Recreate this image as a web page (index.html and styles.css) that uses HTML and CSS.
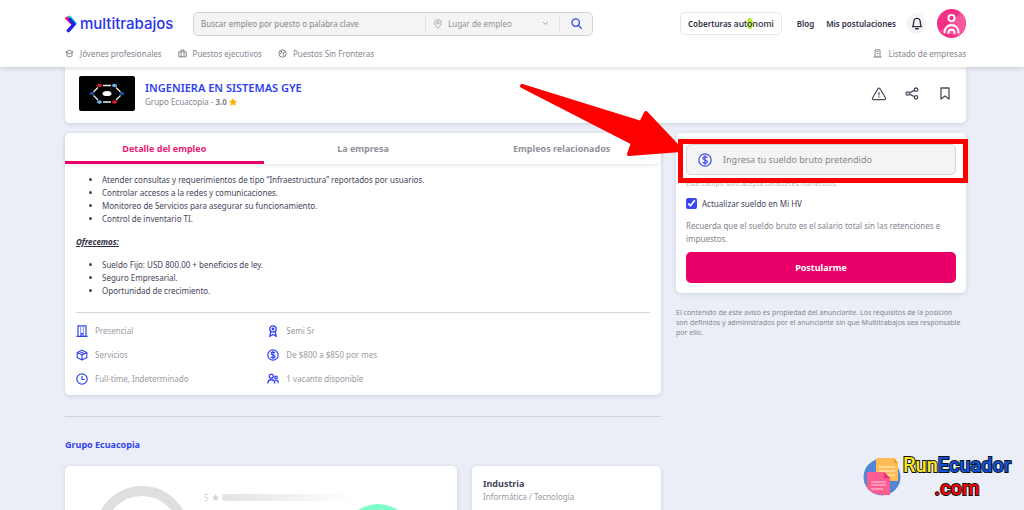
FILE: index.html
```
<!DOCTYPE html>
<html lang="es">

<head>
  <meta charset="UTF-8" />
  <meta name="viewport" content="width=device-width, initial-scale=1" />
  <title>Ingeniera en Sistemas GYE - Multitrabajos</title>
  <link rel="stylesheet" href="styles.css">
</head>

<body>
  <header class="header">
    <div class="header-top">
      <a class="logo" href="#">
        <svg width="12" height="18" viewBox="0 0 12 18" fill="none" stroke-width="3.4" stroke-linecap="round" stroke-linejoin="round">
          <path d="M4.500 2.200 10 8.500" stroke="#14d0c8" />
          <path d="M2 3.200 7.500 8.500" stroke="#f5086f" />
          <path d="M5 4.500 9 9.400 3.400 15.600" stroke="#1a22e8" />
        </svg>
        <span>multitrabajos</span>
      </a>

      <form class="search">
        <input class="search-text" type="text" aria-label="Buscar empleo" placeholder="Buscar empleo por puesto o palabra clave" />
        <div class="search-place">
          <svg width="8" height="10" viewBox="0 0 8 10" fill="none" stroke="#aaaab2"><path d="M4 9.200C2 7 .7 5.600.7 3.800A3.300 3.200 0 0 1 7.300 3.800C7.300 5.600 6 7 4 9.200Z" /><circle cx="4" cy="3.800" r="1.200" /></svg>
          <select aria-label="Lugar de empleo"><option>Lugar de empleo</option></select>
          <svg width="7" height="5" viewBox="0 0 7 5" fill="none" stroke="#a5a5ad"><path d="M1 1l2.500 2.500L6 1" /></svg>
        </div>
        <button class="search-btn" type="submit" aria-label="Buscar">
          <svg width="11" height="11" viewBox="0 0 11 11" fill="none" stroke="#3a46f2" stroke-width="1.300" stroke-linecap="round"><circle cx="4.700" cy="4.600" r="3.700" /><path d="M7.500 7.500 10.200 10.200" /></svg>
        </button>
      </form>

      <nav class="user-nav">
        <a class="coberturas" href="#">Coberturas <span class="autonomi">aut<i>o</i>nomi</span></a>
        <a class="blog" href="#">Blog</a>
        <a class="postulaciones" href="#">Mis postulaciones</a>
        <button class="bell" type="button" aria-label="Notificaciones">
          <svg width="12" height="13" viewBox="0 0 12 13" fill="none" stroke="#303045" stroke-width="1.400" stroke-linejoin="round"><path d="M1.500 9.600h9C9.300 8.400 9.300 7.500 9.300 5A3.300 3.600 0 0 0 2.700 5C2.700 7.500 2.700 8.400 1.500 9.600Z" /><path d="M4.700 11.700h2.600" stroke-linecap="round" /></svg>
        </button>
        <button class="avatar" type="button" aria-label="Mi cuenta">
          <svg width="29" height="29" viewBox="0 0 29 29" fill="none">
            <circle cx="14.500" cy="14.500" r="14.500" fill="#f42f86" />
            <path d="M3 23 24 3.500A14.500 14.500 0 0 1 26 23L22 27Z" fill="#f865a5" opacity=".75" />
            <g stroke="#fff" stroke-width="1.900" stroke-linecap="round"><circle cx="14.500" cy="9" r="3.100" /><path d="M7.500 23.500c0-10 14-10 14 0M11.500 24c0-4.300 6-4.300 6 0" /></g>
          </svg>
        </button>
      </nav>
    </div>

    <nav class="header-links">
      <a href="#"><svg width="9" height="9" viewBox="0 0 9 9" fill="none" stroke="#85858f"><path d="M.8 3 4.500 1.200 8.200 3 4.500 4.800ZM2 4v3c1.400.9 3.600.9 5 0V4" /></svg>Jóvenes profesionales</a>
      <a href="#"><svg width="9" height="9" viewBox="0 0 9 9" fill="none" stroke="#85858f"><path d="M.8 2.800h7.400v5H.8ZM3 2.800V1h3v1.800M3 3v5M6 3v5" /></svg>Puestos ejecutivos</a>
      <a href="#"><svg width="9" height="9" viewBox="0 0 9 9" fill="none" stroke="#85858f"><circle cx="4.500" cy="4.500" r="3.700" /><path d="M2 2l2 .5L3 4.500l-1.500.5M7.500 3 5.500 3.500 5 5l1 2" /></svg>Puestos Sin Fronteras</a>
      <a class="empresas" href="#"><svg width="9" height="9" viewBox="0 0 9 9" fill="none" stroke="#85858f"><path d="M2 8V.8h5V8M.5 8h8M4.500 8V6.500M3.500 2.500h2M3.500 4.500h2" /></svg>Listado de empresas</a>
    </nav>
  </header>

  <main class="page">
    <section class="job-head">
      <svg class="company-logo" width="56" height="35" viewBox="0 0 56 35">
        <rect width="56" height="35" rx="2" fill="#000" />
        <path d="M24 9.500h8M24 26h8M19 11.500l-4.500 4.500M37 11.500l4.500 4.500M14.500 19.500 19 24M41.500 19.500 37 24" fill="none" stroke="#eee" stroke-width="1.300" />
        <ellipse cx="28" cy="17.500" rx="4.500" ry="2.600" fill="#fff" />
        <g fill="#d71d35"><ellipse cx="20.500" cy="9.500" rx="2.500" ry="1.800" /><ellipse cx="35.500" cy="26" rx="2.500" ry="1.800" /></g>
        <g fill="#6db5e8"><ellipse cx="35.500" cy="9.500" rx="2.500" ry="1.800" /><ellipse cx="20.500" cy="26" rx="2.500" ry="1.800" /></g>
        <g fill="#16509c"><ellipse cx="13" cy="17.500" rx="2.500" ry="1.800" /><ellipse cx="43" cy="17.500" rx="2.500" ry="1.800" /></g>
      </svg>
      <div class="job-title">
        <h1>INGENIERA EN SISTEMAS GYE</h1>
        <p>Grupo Ecuacopia - <b>3.0</b> <svg width="8" height="8" viewBox="0 0 10 10"><path d="M5 0l1.500 3.200 3.500.5-2.500 2.500.6 3.600L5 8.100 1.900 9.800l.6-3.600L0 3.700l3.500-.5Z" fill="#ffb100" /></svg></p>
      </div>
      <div class="job-actions">
        <button type="button" aria-label="Denunciar"><svg width="16" height="14" viewBox="0 0 16 14" fill="none" stroke="#4c4c5e" stroke-width="1.200" stroke-linejoin="round"><path d="M8 1.200Q8.700 1.200 9.200 2L14.500 11Q15 12.600 13.500 12.600H2.500Q1 12.600 1.500 11L6.800 2Q7.300 1.200 8 1.200ZM8 5v3.500M8 9.600v1.200" /></svg></button>
        <button type="button" aria-label="Compartir"><svg width="14" height="13" viewBox="0 0 14 13" fill="none" stroke="#4c4c5e" stroke-width="1.300"><circle cx="2.700" cy="6.500" r="1.700" /><circle cx="11" cy="2.700" r="1.700" /><circle cx="11" cy="10.300" r="1.700" /><path d="M4.200 5.800 9.400 3.300M4.200 7.200 9.400 9.700" /></svg></button>
        <button type="button" aria-label="Guardar"><svg width="10" height="13" viewBox="0 0 10 13" fill="none" stroke="#4c4c5e" stroke-width="1.300" stroke-linejoin="round"><path d="M1 1h8v11L5 9 1 12Z" /></svg></button>
      </div>
    </section>

    <div class="columns">
      <div class="main-col">
        <section class="detail">
          <div class="tabs">
            <button class="tab active" type="button">Detalle del empleo</button>
            <button class="tab" type="button">La empresa</button>
            <button class="tab" type="button">Empleos relacionados</button>
          </div>
          <div class="detail-body">
            <ul>
              <li>Atender consultas y requerimientos de tipo “Infraestructura” reportados por usuarios.</li>
              <li>Controlar accesos a la redes y comunicaciones.</li>
              <li>Monitoreo de Servicios para asegurar su funcionamiento.</li>
              <li>Control de inventario TI.</li>
            </ul>
            <h3>Ofrecemos:</h3>
            <ul>
              <li>Sueldo Fijo: USD 800.00 + beneficios de ley.</li>
              <li>Seguro Empresarial.</li>
              <li>Oportunidad de crecimiento.</li>
            </ul>
            <div class="facts">
              <div><svg width="12" height="12" viewBox="0 0 12 12" fill="none" stroke="#3344f0" stroke-width="1.200"><path d="M2 11.300V.8h8v10.500M.5 11.300h11M5 11V8.500h2V11" /><path d="M4 3h1.200M6.800 3H8M4 5h1.200M6.800 5H8M4 7h1.200M6.800 7H8" /></svg>Presencial</div>
              <div><svg width="12" height="12" viewBox="0 0 12 12" fill="none" stroke="#3344f0" stroke-width="1.300"><circle cx="6" cy="4" r="3.200" /><circle cx="6" cy="4" r=".8" /><path d="M3.800 6.500 2.800 11.300 6 9.400 9.200 11.300 8.200 6.500" /></svg>Semi Sr</div>
              <div><svg width="12" height="12" viewBox="0 0 12 12" fill="none" stroke="#3344f0" stroke-width="1.200" stroke-linejoin="round"><path d="M6 1.200 10.800 3.500V8.500L6 11 1.200 8.500V3.500ZM1.200 3.500 6 6l4.800-2.500M6 6v5M3.500 2.400 8.300 4.800" /></svg>Servicios</div>
              <div><svg width="12" height="12" viewBox="0 0 12 12" fill="none" stroke="#3344f0" stroke-width="1.200"><circle cx="6" cy="6" r="5.200" /><path d="M8 4.200C7.500 2.700 4.200 2.900 4.200 4.600S8 5.800 8 7.500 4.500 9.200 4 7.800M6 2v8" /></svg>De $800 a $850 por mes</div>
              <div><svg width="12" height="12" viewBox="0 0 12 12" fill="none" stroke="#3344f0" stroke-width="1.200"><circle cx="6" cy="6" r="5.200" /><path d="M6 3v3.500h2.600" /></svg>Full-time, Indeterminado</div>
              <div><svg width="12" height="12" viewBox="0 0 12 12" fill="none" stroke="#3344f0" stroke-width="1.300"><circle cx="4.300" cy="3.200" r="2" /><path d="M.8 10.500c0-5 7-5 7 0" /><circle cx="9" cy="4.500" r="1.300" /><path d="M8 7.300c2.300-.8 3.300 1 3.300 3" /></svg>1 vacante disponible</div>
            </div>
          </div>
        </section>

        <section class="company">
          <h2>Grupo Ecuacopia</h2>
          <div class="company-cards">
            <div class="card rating">
              <svg class="ring" width="94" height="94" viewBox="0 0 94 94"><circle cx="47" cy="47" r="42" fill="none" stroke="#dfdfe1" stroke-width="10" /></svg>
              <div class="stars"><span>5</span><svg width="7" height="7" viewBox="0 0 10 10"><path d="M5 0l1.500 3.200 3.500.5-2.500 2.500.6 3.600L5 8.100 1.900 9.800l.6-3.600L0 3.700l3.500-.5Z" fill="#d5d5d8" /></svg><div class="bar"></div></div>
              <div class="blob"></div>
            </div>
            <div class="card industry">
              <h4>Industria</h4>
              <p>Informática / Tecnología</p>
            </div>
          </div>
        </section>
      </div>

      <aside class="side-col">
        <form class="card apply">
          <div class="salary">
            <svg width="14" height="14" viewBox="0 0 12 12" fill="none" stroke="#4650f0" stroke-width="1.100"><circle cx="6" cy="6" r="5.300" /><path d="M8 4.200C7.500 2.700 4.200 2.900 4.200 4.600S8 5.800 8 7.500 4.500 9.200 4 7.800M6 2v8" /></svg>
            <input type="text" aria-label="Sueldo bruto pretendido" placeholder="Ingresa tu sueldo bruto pretendido" />
          </div>
          <p class="hint">Este campo solo acepta caracteres numéricos.</p>
          <label class="check"><input type="checkbox" checked />Actualizar sueldo en Mi HV</label>
          <p class="note">Recuerda que el sueldo bruto es el salario total sin las retenciones e impuestos.</p>
          <button class="apply-btn" type="submit">Postularme</button>
        </form>
        <p class="legal">El contenido de este aviso es propiedad del anunciante. Los requisitos de la posición son definidos y administrados por el anunciante sin que Multitrabajos sea responsable por ello.</p>
      </aside>
    </div>
  </main>

  <svg class="arrow" width="170" height="80" viewBox="0 0 170 80"><path d="M3 5 122 42 127 32 162 69 110 73 114 62Z" fill="#f00" stroke="#f00" stroke-width="4" stroke-linejoin="round" /></svg>
  <div class="marker"></div>

  <a class="watermark" href="#">
    <svg width="38" height="40" viewBox="0 0 38 40">
      <circle cx="19" cy="20" r="18.500" fill="#5187d6" />
      <path d="M13 1h18l4 5v18H13Z" fill="#ffbb55" /><path d="M31 1v5h4Z" fill="#f49b28" />
      <path d="M16 10h16M16 14h16M16 18h16" stroke="#fff2d8" />
      <path d="M4 15h17l6 6v17H20Q10 38 4 31Z" fill="#ff5c91" /><path d="M21 15v6h6Z" fill="#d93473" />
      <path d="M8 25h15M8 28h15M8 32h12" stroke="#ffd7e4" />
    </svg>
    <span class="watermark-text"><span class="run">Run</span><span class="ecuador">Ecuador</span><br /><span class="com">.com</span></span>
  </a>
</body>

</html>
```
FILE: styles.css
```
* {
  margin: 0;
  padding: 0;
  box-sizing: border-box;
}

body {
  position: relative;
  height: 100vh;
  overflow: hidden;
  background-color: #ebeef7;
  color: #45455a;
  font-family: 'Noto Sans', sans-serif;
  font-size: 8px;
  line-height: 13px;
}

a {
  color: inherit;
  text-decoration: none;
}

button,
input,
select {
  border: none;
  background: none;
  font: inherit;
  color: inherit;
  outline: none;
}

button {
  cursor: pointer;
}

svg {
  flex: none;
}

/* Header */
.header {
  position: relative;
  z-index: 2;
  padding: 9px 58px 7px 65px;
  background-color: #fff;
  box-shadow: 0 1px 5px rgba(0, 0, 0, 0.16);
}

.header-top {
  display: flex;
  align-items: center;
  height: 29px;
}

.logo {
  display: flex;
  align-items: center;
  gap: 3px;
  width: 128px;
  color: #2733ec;
  font-family: Inter, sans-serif;
  font-size: 15px;
  font-weight: 500;
  line-height: 20px;
}

.search {
  display: flex;
  align-items: center;
  flex: 0 1 400px;
  height: 24px;
  border: 1px solid #d5d5d8;
  border-radius: 5px;
  background-color: #f4f4f4;
}

.search-text {
  flex: 1;
  padding: 0 7px;
}

.search-text::placeholder,
.salary input::placeholder {
  color: #85858d;
  opacity: 1;
}

.search-place {
  display: flex;
  align-items: center;
  gap: 6px;
  width: 135px;
  height: 16px;
  padding: 0 10px 0 8px;
  border: 1px solid #e3e3e6;
  border-width: 0 1px;
}

.search-place select {
  flex: 1;
  appearance: none;
  color: #92929b;
}

.search-btn {
  display: flex;
  justify-content: center;
  align-items: center;
  width: 32px;
}

.user-nav {
  display: flex;
  align-items: center;
  margin-left: auto;
  color: #303045;
  font-weight: 600;
}

.coberturas {
  padding: 4px 7px;
  margin-right: 15px;
  border: 1px solid #e8e8ec;
  border-radius: 5px;
}

.autonomi {
  font-family: Inter, sans-serif;
  font-size: 9px;
  font-weight: 500;
}

.autonomi i {
  font-style: normal;
  border-radius: 50%;
  background-color: #b6f02c;
}

.blog {
  margin-right: 12px;
}

.bell {
  display: flex;
  justify-content: center;
  align-items: center;
  width: 21px;
  height: 21px;
  margin: 0 10px;
  border-radius: 50%;
  background-color: #f5f5f6;
}

.avatar {
  display: flex;
}

.header-links {
  display: flex;
  gap: 16px;
  margin-top: 9px;
  color: #85858f;
}

.header-links a {
  display: flex;
  align-items: center;
  gap: 6px;
}

.header-links .empresas {
  margin-left: auto;
}

/* Job */
.page {
  padding: 0 58px 0 65px;
}

.card,
.job-head,
.detail {
  border-radius: 5px;
  background-color: #fff;
  box-shadow: 0 1px 4px rgba(40, 50, 80, 0.16);
}

.job-head {
  display: flex;
  align-items: center;
  gap: 10px;
  padding: 9px 5px 12px 14px;
  border-radius: 0 0 5px 5px;
}

.job-title h1 {
  color: #2f3ff0;
  font-size: 11px;
  font-weight: 600;
  line-height: 15px;
}

.job-title p {
  color: #85858f;
}

.job-title p svg {
  vertical-align: -1px;
}

.job-actions {
  display: flex;
  margin-left: auto;
}

.job-actions button {
  display: flex;
  align-items: center;
  justify-content: center;
  width: 33px;
}

.columns {
  display: flex;
  align-items: flex-start;
  gap: 15px;
  margin-top: 10px;
}

.main-col {
  flex: 1;
}

.side-col {
  flex: 0 0 290px;
}

.tabs {
  display: flex;
  height: 31px;
  border-radius: 5px;
  box-shadow: 0 2px 4px rgba(0, 0, 0, 0.08);
}

.tab {
  flex: 1;
  padding-top: 3px;
  border-bottom: 3px solid transparent;
  color: #92929b;
  font-size: 9px;
  font-weight: 700;
}

.tab.active {
  border-bottom-color: #e80068;
  color: #ec1a76;
}

.detail-body {
  padding: 9px 11px;
}

.detail-body ul {
  padding-left: 26px;
}

.detail-body h3 {
  margin: 10px 0;
  color: #303045;
  font-size: 8px;
  font-style: italic;
  text-decoration: underline;
}

.facts {
  display: grid;
  grid-template-columns: 1fr 2fr;
  gap: 11px 0;
  margin-top: 15px;
  padding: 11px 0 1px;
  border-top: 1px solid #d5d5d8;
  color: #9a9aa2;
}

.facts div {
  display: flex;
  align-items: center;
  gap: 7px;
}

/* Company */
.company {
  margin-top: 21px;
  border-top: 1px solid #d1d3d9;
}

.company h2 {
  margin: 21px 0 15px;
  color: #3442ee;
  font-size: 9px;
  font-weight: 700;
}

.company-cards {
  display: flex;
  gap: 15px;
}

.rating {
  display: flex;
  flex: 1;
  height: 130px;
  padding: 20px 30px;
  overflow: hidden;
}

.stars {
  display: flex;
  align-items: center;
  gap: 3px;
  height: 22px;
  margin-left: 15px;
  color: #d0d0d4;
}

.bar {
  width: 130px;
  height: 7px;
  border-radius: 2px;
  background: linear-gradient(to right, #e3e3e5, #fff);
}

.blob {
  flex: none;
  width: 72px;
  height: 72px;
  margin: 18px 0 0 -10px;
  border-radius: 50%;
  background-color: #7dffc8;
}

.industry {
  width: 189px;
  padding: 11px;
  color: #9a9aa2;
}

.industry h4 {
  color: #45455a;
  font-size: 9px;
  font-weight: 700;
}

/* Apply */
.apply {
  padding: 11px 10px 10px;
}

.salary {
  display: flex;
  align-items: center;
  gap: 11px;
  height: 31px;
  padding: 0 11px;
  border: 1px solid #d5d5d8;
  border-radius: 5px;
  background-color: #f4f4f4;
}

.salary input {
  flex: 1;
  font-size: 9px;
}

.hint {
  margin-top: 2px;
  color: #b5b5bc;
  font-size: 7px;
}

.check {
  display: flex;
  align-items: center;
  gap: 5px;
  margin: 7px 0 9px;
}

.check input {
  width: 11px;
  height: 11px;
  accent-color: #3a46f2;
}

.note {
  color: #85858f;
}

.apply-btn {
  width: 100%;
  height: 31px;
  margin-top: 7px;
  border-radius: 5px;
  background-color: #e80068;
  color: #fff;
  font-size: 9px;
  font-weight: 700;
}

.legal {
  margin-top: 15px;
  color: #85858f;
  font-size: 7px;
  line-height: 10px;
}

/* Overlays */
.arrow {
  position: absolute;
  z-index: 3;
  top: 81px;
  left: 519px;
}

.marker {
  position: absolute;
  z-index: 3;
  top: 139px;
  left: 678px;
  width: 290px;
  height: 44px;
  border: 5px solid #f00;
}

.watermark {
  position: absolute;
  z-index: 3;
  right: 13px;
  bottom: 10px;
  display: flex;
  align-items: center;
  gap: 2px;
}

.watermark-text {
  font-family: Roboto, sans-serif;
  font-size: 20px;
  font-weight: 500;
  line-height: 23px;
  text-align: center;
  -webkit-text-stroke: 2px #111;
  paint-order: stroke fill;
}

.run {
  color: #ffe81a;
}

.ecuador {
  color: #0b55e0;
}

.com {
  color: #f00;
}
```
